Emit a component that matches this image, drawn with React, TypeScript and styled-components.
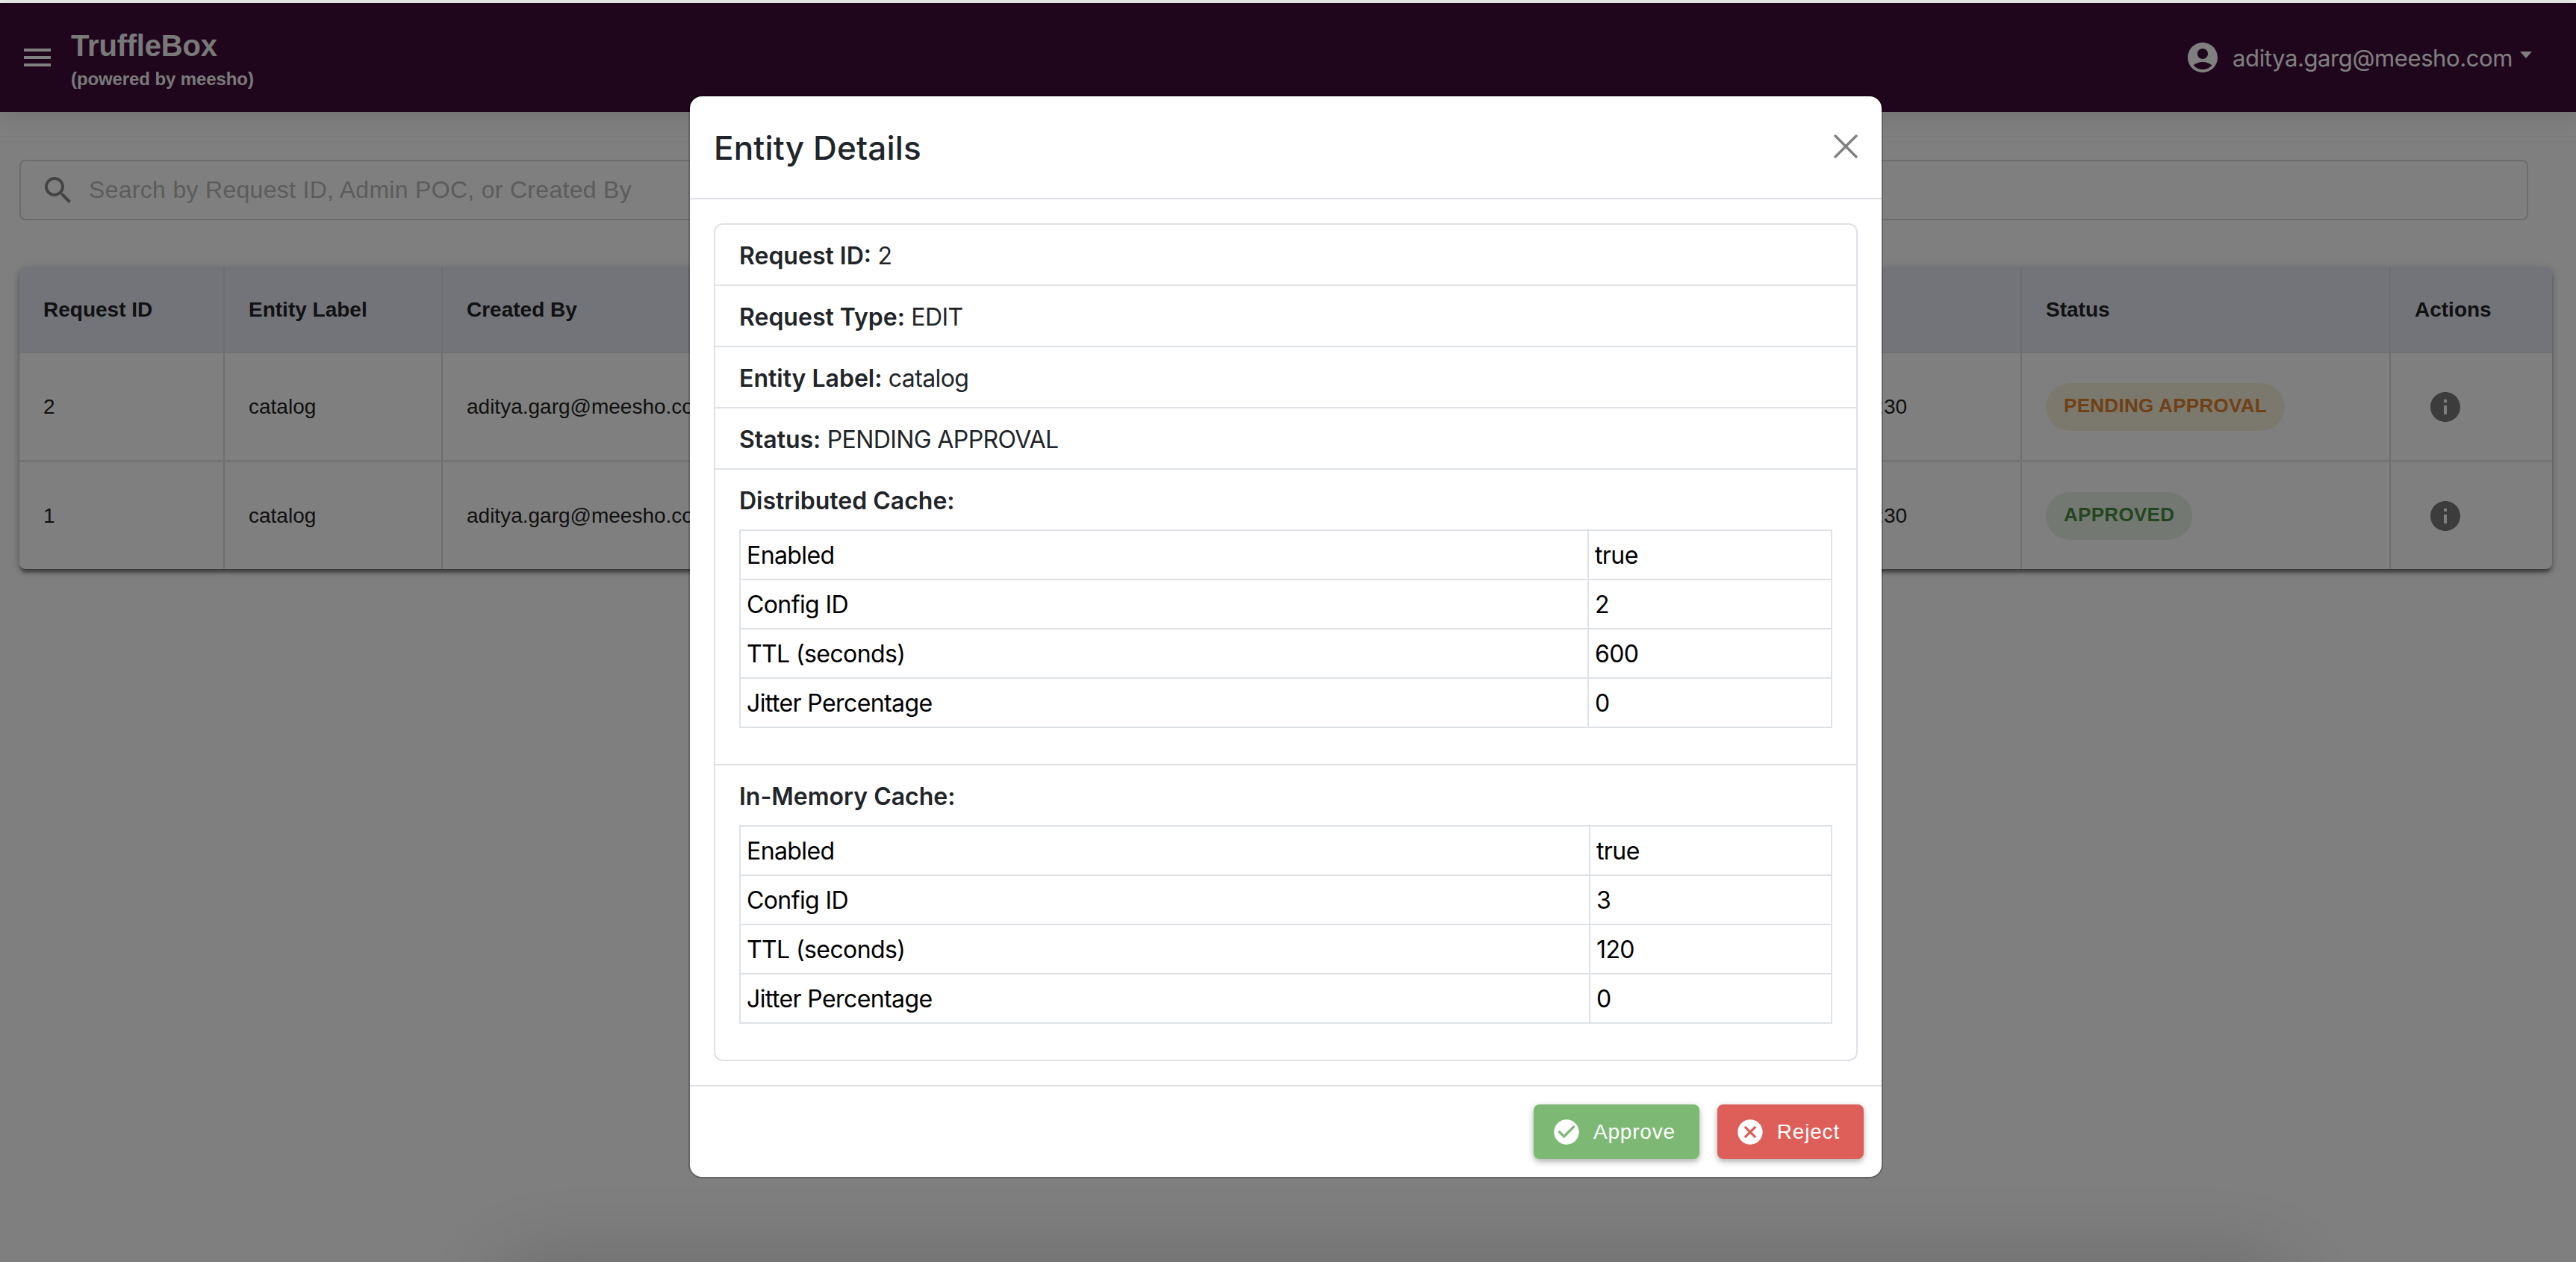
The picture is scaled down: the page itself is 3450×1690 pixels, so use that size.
import React from 'react';
import styled, { createGlobalStyle } from 'styled-components';

const GlobalStyle = createGlobalStyle`
  * {
    box-sizing: border-box;
  }
  html,
  body {
    margin: 0;
    padding: 0;
  }
  body {
    font-family: 'Liberation Sans', Arial, sans-serif;
    background: #ececec;
  }
`;

const UI_FONT = `Inter, 'Noto Sans', sans-serif`;

const Page = styled.div`
  position: relative;
  width: 3450px;
  height: 1690px;
  overflow: hidden;
  padding-top: 4px;
`;

const Shell = styled.div`
  height: 1686px;
  background: #ffffff;
`;

const AppBar = styled.header`
  height: 146px;
  background: #3e0c38;
  color: #ffffff;
  display: flex;
  align-items: center;
  justify-content: space-between;
  padding: 0 59px 0 26px;
  box-shadow: 0 4px 30px rgba(0, 0, 0, 0.12);
`;

const Brand = styled.div`
  display: flex;
  align-items: center;
  gap: 21px;
`;

const BrandText = styled.div`
  display: flex;
  flex-direction: column;
  margin-top: 3px;
  font-weight: 700;
  opacity: 0.95;
`;

const BrandName = styled.span`
  font-size: 40px;
  line-height: 48px;
  letter-spacing: -0.2px;
`;

const BrandSub = styled.span`
  font-size: 24px;
  line-height: 30px;
  margin-top: 6px;
  letter-spacing: -0.1px;
`;

const UserMenu = styled.div`
  display: flex;
  align-items: center;
  gap: 16px;
  font-family: ${UI_FONT};
  font-size: 31px;
  letter-spacing: -0.4px;
`;

const Caret = styled.span`
  width: 0;
  height: 0;
  margin-left: -6px;
  margin-bottom: 8px;
  border-left: 8px solid transparent;
  border-right: 8px solid transparent;
  border-top: 9px solid #ffffff;
`;

const Icon = styled.svg<{ $size: number; $color: string }>`
  display: block;
  flex: none;
  width: ${props => props.$size}px;
  height: ${props => props.$size}px;
  fill: ${props => props.$color};
`;

const Main = styled.main`
  margin-top: 32px;
  padding: 30px 32px 0 26px;
  border-top: 2px solid #f6f6f6;
`;

const SearchBox = styled.div`
  height: 81px;
  margin-right: 32px;
  display: flex;
  align-items: center;
  gap: 17px;
  padding-left: 26px;
  border: 2px solid #d8d8d8;
  border-radius: 8px;
`;

const SearchPlaceholder = styled.span`
  font-size: 32px;
  letter-spacing: 0.3px;
  color: #b8b8b8;
`;

const TableCard = styled.div`
  margin-top: 63px;
  border-radius: 8px;
  overflow: hidden;
  box-shadow: 0 6px 4px -2px rgba(0, 0, 0, 0.4), 0 4px 8px rgba(0, 0, 0, 0.2), 0 2px 14px rgba(0, 0, 0, 0.14);
`;

const RequestTable = styled.table`
  width: 100%;
  table-layout: fixed;
  border-collapse: collapse;
  font-size: 28px;
  color: #222222;
`;

const HeadCell = styled.th<{ $width: number }>`
  width: ${props => props.$width}px;
  height: 114px;
  padding: 0 32px;
  text-align: left;
  font-weight: 700;
  background: #e4e8f4;
  border-right: 2px solid #dcdcdc;
  border-bottom: 2px solid #e4e4e4;
  &:last-child {
    border-right: none;
  }
`;

const BodyCell = styled.td`
  height: 145px;
  padding: 2px 32px 0;
  white-space: nowrap;
  border-right: 2px solid #dcdcdc;
  border-bottom: 3px solid #e6e6e6;
  &:last-child {
    border-right: none;
  }
  tr:last-child > & {
    border-bottom: none;
  }
`;

const StatusChip = styled.span<{ $bg: string; $fg: string }>`
  display: inline-flex;
  align-items: center;
  height: 64px;
  padding: 0 24px 3px;
  border-radius: 32px;
  font-size: 26px;
  font-weight: 700;
  letter-spacing: 0.3px;
  background: ${props => props.$bg};
  color: ${props => props.$fg};
`;

const InfoButton = styled.span`
  display: block;
  margin-left: 17px;
`;

const BottomShade = styled.div`
  position: absolute;
  left: 700px;
  right: 420px;
  top: 1720px;
  height: 100px;
  box-shadow: 0 0 120px 30px rgba(0, 0, 0, 0.18);
`;

const Backdrop = styled.div`
  position: absolute;
  top: 4px;
  left: 0;
  right: 0;
  bottom: 0;
  display: flex;
  justify-content: center;
  align-items: flex-start;
  padding: 123px 6px 0 0;
  background: rgba(0, 0, 0, 0.5);
`;

const Modal = styled.div`
  width: 1600px;
  background: #ffffff;
  background-clip: padding-box;
  border: 2px solid rgba(0, 0, 0, 0.2);
  border-radius: 18px;
  font-family: ${UI_FONT};
  color: #212529;
`;

const ModalHeader = styled.div`
  height: 138px;
  display: flex;
  align-items: center;
  justify-content: space-between;
  padding: 0 32px;
  border-bottom: 2px solid #dee2e6;
`;

const ModalTitle = styled.h5`
  margin: 2px 0 0;
  font-size: 44px;
  line-height: 60px;
  font-weight: 500;
  letter-spacing: 0.15px;
`;

const CloseIcon = styled.svg`
  display: block;
  width: 32px;
  height: 32px;
  stroke: #808080;
  stroke-width: 3.4px;
  stroke-linecap: round;
  margin-top: -3px;
`;

const ModalBody = styled.div`
  padding: 32px;
`;

const DetailList = styled.div`
  border: 2px solid #dee2e6;
  border-radius: 12px;
`;

const DetailItem = styled.div`
  padding: 18px 32px 14px;
  font-size: 32px;
  line-height: 48px;
  letter-spacing: -0.6px;
  border-bottom: 2px solid #dee2e6;
  &:last-child {
    border-bottom: none;
  }
`;

const Label = styled.strong`
  font-weight: 600;
  letter-spacing: 0;
`;

const SectionItem = styled(DetailItem)`
  padding-bottom: 48px;
  &:last-child {
    padding-bottom: 48px;
  }
`;

const CacheTable = styled.table`
  width: 100%;
  margin-top: 14px;
  table-layout: fixed;
  border-collapse: collapse;
  color: #000000;
`;

const CacheCell = styled.td<{ $width?: number }>`
  width: ${props => (props.$width ? `${props.$width}px` : 'auto')};
  height: 66px;
  padding: 2px 8px 0;
  border: 2px solid #dee2e6;
`;

const ModalFooter = styled.div`
  display: flex;
  justify-content: flex-end;
  gap: 24px;
  padding: 24px;
  border-top: 2px solid #dee2e6;
`;

const ActionButton = styled.button<{ $bg: string }>`
  display: flex;
  align-items: center;
  gap: 16px;
  height: 73px;
  padding: 0 32px 0 24px;
  border: none;
  border-radius: 8px;
  background: ${props => props.$bg};
  color: #ffffff;
  font-family: 'Liberation Sans', Arial, sans-serif;
  font-size: 28px;
  letter-spacing: 0.8px;
  box-shadow: 0 4px 8px rgba(0, 0, 0, 0.25), 0 1px 6px rgba(0, 0, 0, 0.1);
`;

const PATHS = {
  menu: 'M3 18h18v-2H3v2zm0-5h18v-2H3v2zm0-7v2h18V6H3z',
  account:
    'M12 2C6.48 2 2 6.48 2 12s4.48 10 10 10 10-4.48 10-10S17.52 2 12 2zm0 4c1.93 0 3.5 1.57 3.5 3.5S13.93 13 12 13s-3.5-1.57-3.5-3.5S10.07 6 12 6zm0 14c-2.03 0-4.43-.82-6.14-2.88C7.55 15.8 9.68 15 12 15s4.45.8 6.14 2.12C16.43 19.18 14.03 20 12 20z',
  search:
    'M15.5 14h-.79l-.28-.27C15.41 12.59 16 11.11 16 9.5 16 5.91 13.09 3 9.5 3S3 5.91 3 9.5 5.91 16 9.5 16c1.61 0 3.09-.59 4.23-1.57l.27.28v.79l5 4.99L20.49 19l-4.99-5zm-6 0C7.01 14 5 11.99 5 9.5S7.01 5 9.5 5 14 7.01 14 9.5 11.99 14 9.5 14z',
  info: 'M12 2C6.48 2 2 6.48 2 12s4.48 10 10 10 10-4.48 10-10S17.52 2 12 2zm1 15h-2v-6h2v6zm0-8h-2V7h2v2z',
  check:
    'M12 2C6.48 2 2 6.48 2 12s4.48 10 10 10 10-4.48 10-10S17.52 2 12 2zm-2 15-5-5 1.41-1.41L10 14.17l7.59-7.59L19 8l-9 9z',
  cancel:
    'M12 2C6.47 2 2 6.47 2 12s4.47 10 10 10 10-4.47 10-10S17.53 2 12 2zm5 13.59L15.59 17 12 13.41 8.41 17 7 15.59 10.59 12 7 8.41 8.41 7 12 10.59 15.59 7 17 8.41 13.41 12 17 15.59z',
};

const MuiIcon: React.FC<{ name: keyof typeof PATHS; size: number; color: string }> = ({ name, size, color }) => (
  <Icon viewBox="0 0 24 24" $size={size} $color={color}>
    <path d={PATHS[name]} />
  </Icon>
);

const COLUMNS = [
  { title: 'Request ID', width: 274 },
  { title: 'Entity Label', width: 292 },
  { title: 'Created By', width: 508 },
  { title: 'Admin POC', width: 590 },
  { title: 'Request Type', width: 610 },
  { title: 'Created At', width: 407 },
  { title: 'Status', width: 494 },
  { title: 'Actions', width: 217 },
];

const REQUESTS = [
  { id: 2, status: 'PENDING APPROVAL', bg: '#f6f2da', fg: '#e0802c' },
  { id: 1, status: 'APPROVED', bg: '#e6f2e4', fg: '#468c40' },
];

const DISTRIBUTED = [
  ['Enabled', 'true'],
  ['Config ID', '2'],
  ['TTL (seconds)', '600'],
  ['Jitter Percentage', '0'],
];

const IN_MEMORY = [
  ['Enabled', 'true'],
  ['Config ID', '3'],
  ['TTL (seconds)', '120'],
  ['Jitter Percentage', '0'],
];

const CacheSection: React.FC<{ title: string; rows: string[][]; labelWidth: number }> = ({ title, rows, labelWidth }) => (
  <SectionItem>
    <Label>{title}</Label>
    <CacheTable>
      <tbody>
        {rows.map(([key, value], index) => (
          <tr key={key}>
            <CacheCell $width={index === 0 ? labelWidth : undefined}>{key}</CacheCell>
            <CacheCell>{value}</CacheCell>
          </tr>
        ))}
      </tbody>
    </CacheTable>
  </SectionItem>
);

const App: React.FC = () => (
  <Page>
    <GlobalStyle />
    <Shell>
      <AppBar>
        <Brand>
          <MuiIcon name="menu" size={48} color="#ffffff" />
          <BrandText>
            <BrandName>TruffleBox</BrandName>
            <BrandSub>(powered by meesho)</BrandSub>
          </BrandText>
        </Brand>
        <UserMenu>
          <MuiIcon name="account" size={48} color="#ffffff" />
          <span>aditya.garg@meesho.com</span>
          <Caret />
        </UserMenu>
      </AppBar>
      <Main>
        <SearchBox>
          <MuiIcon name="search" size={48} color="#888888" />
          <SearchPlaceholder>Search by Request ID, Admin POC, or Created By</SearchPlaceholder>
        </SearchBox>
        <TableCard>
          <RequestTable>
            <thead>
              <tr>
                {COLUMNS.map(col => (
                  <HeadCell key={col.title} $width={col.width}>
                    {col.title}
                  </HeadCell>
                ))}
              </tr>
            </thead>
            <tbody>
              {REQUESTS.map(req => (
                <tr key={req.id}>
                  <BodyCell>{req.id}</BodyCell>
                  <BodyCell>catalog</BodyCell>
                  <BodyCell>aditya.garg@meesho.com</BodyCell>
                  <BodyCell>aditya.garg@meesho.com</BodyCell>
                  <BodyCell>EDIT</BodyCell>
                  <BodyCell>2025-07-22 14:30</BodyCell>
                  <BodyCell>
                    <StatusChip $bg={req.bg} $fg={req.fg}>
                      {req.status}
                    </StatusChip>
                  </BodyCell>
                  <BodyCell>
                    <InfoButton>
                      <MuiIcon name="info" size={48} color="#787878" />
                    </InfoButton>
                  </BodyCell>
                </tr>
              ))}
            </tbody>
          </RequestTable>
        </TableCard>
      </Main>
    </Shell>
    <BottomShade />
    <Backdrop>
      <Modal>
        <ModalHeader>
          <ModalTitle>Entity Details</ModalTitle>
          <CloseIcon viewBox="0 0 32 32">
            <path d="M2 2 30 30 M30 2 2 30" />
          </CloseIcon>
        </ModalHeader>
        <ModalBody>
          <DetailList>
            <DetailItem>
              <Label>Request ID:</Label> 2
            </DetailItem>
            <DetailItem>
              <Label>Request Type:</Label> EDIT
            </DetailItem>
            <DetailItem>
              <Label>Entity Label:</Label> catalog
            </DetailItem>
            <DetailItem>
              <Label>Status:</Label> PENDING APPROVAL
            </DetailItem>
            <CacheSection title="Distributed Cache:" rows={DISTRIBUTED} labelWidth={1136} />
            <CacheSection title="In-Memory Cache:" rows={IN_MEMORY} labelWidth={1138} />
          </DetailList>
        </ModalBody>
        <ModalFooter>
          <ActionButton $bg="#7db974">
            <MuiIcon name="check" size={40} color="#ffffff" />
            Approve
          </ActionButton>
          <ActionButton $bg="#de5f59">
            <MuiIcon name="cancel" size={40} color="#ffffff" />
            Reject
          </ActionButton>
        </ModalFooter>
      </Modal>
    </Backdrop>
  </Page>
);

export default App;
